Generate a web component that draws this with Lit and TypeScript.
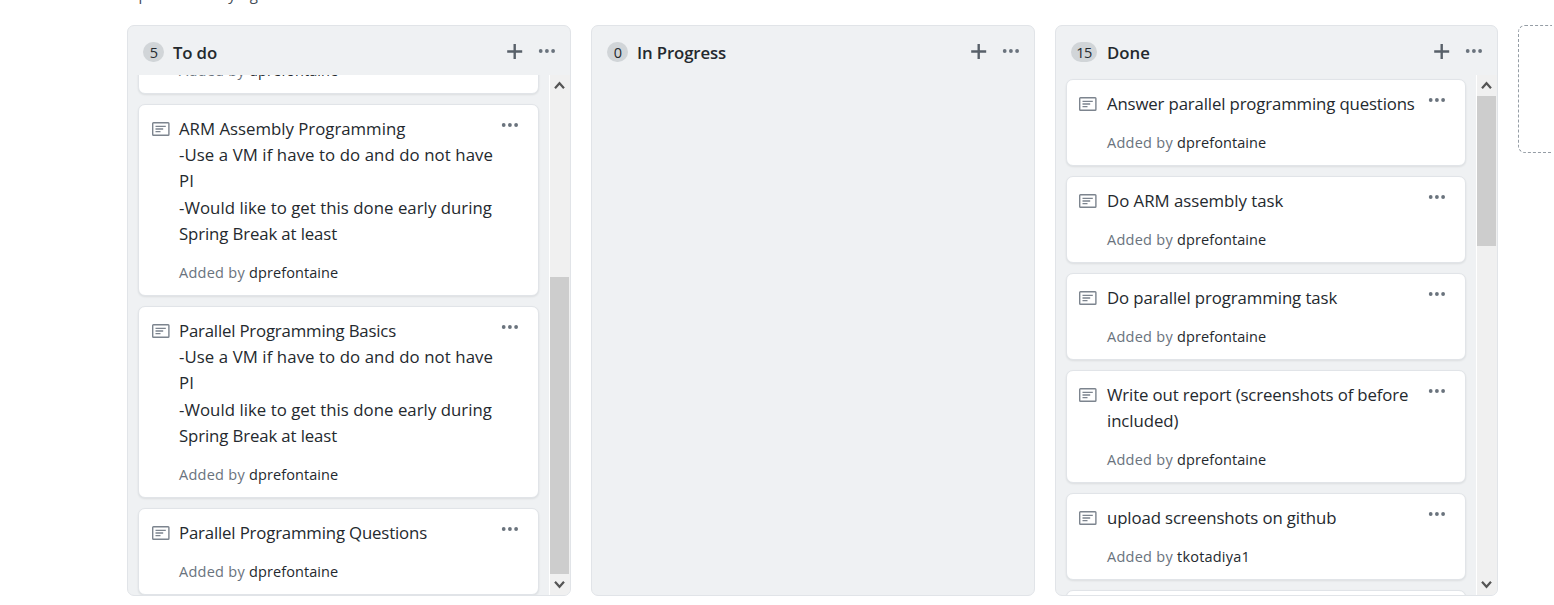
import { LitElement, html, css, svg } from "lit";
import { customElement, property } from "lit/decorators.js";

@customElement("fit-text")
class FitText extends LitElement {
  @property() text = "";
  @property({ type: Number }) width = 0;
  static styles = css`
    :host { display: inline-block; white-space: pre; }
    .run { display: inline-block; white-space: pre; }
  `;
  render() {
    return html`<span class="run">${this.text}</span>`;
  }
  updated() {
    const run = this.renderRoot.querySelector(".run") as HTMLElement;
    if (!this.text) return;
    run.style.letterSpacing = "0px";
    const natural = run.getBoundingClientRect().width;
    const spacing = (this.width - natural) / this.text.length;
    run.style.letterSpacing = spacing.toFixed(3) + "px";
  }
}

type Line = [string, number];
interface Note { lines: Line[]; by: Line }
interface Column { title: Line; count: string; cls: string; notes: Note[]; scroll: boolean }

const dp: Line = ["dprefontaine", 89.3];
const vm: Line[] = [
  ["-Use a VM if have to do and do not have", 314],
  ["PI", 15],
  ["-Would like to get this done early during", 313],
  ["Spring Break at least", 158],
];
const columns: Column[] = [
  {
    title: ["To do", 44], count: "5", cls: "todo", scroll: true,
    notes: [
      { lines: [["", 0]], by: dp },
      { lines: [["ARM Assembly Programming", 226.3], ...vm], by: dp },
      { lines: [["Parallel Programming Basics", 217], ...vm], by: dp },
      { lines: [["Parallel Programming Questions", 248]], by: dp },
    ],
  },
  { title: ["In Progress", 89], count: "0", cls: "progress", scroll: false, notes: [] },
  {
    title: ["Done", 43], count: "15", cls: "done", scroll: true,
    notes: [
      { lines: [["Answer parallel programming questions", 307.7]], by: dp },
      { lines: [["Do ARM assembly task", 176.3]], by: dp },
      { lines: [["Do parallel programming task", 230.2]], by: dp },
      { lines: [["Write out report (screenshots of before", 301.3], ["included)", 71.3]], by: dp },
      { lines: [["upload screenshots on github", 229.3]], by: ["tkotadiya1", 73] },
      { lines: [["", 0]], by: ["", 0] },
    ],
  },
];

const dots = html`<svg class="dots" viewBox="0 0 18 6" width="18" height="6">
  ${[2.7, 8.9, 15.1].map((x) => svg`<circle cx=${x} cy="3" r="1.9" fill="#6a737d"></circle>`)}
</svg>`;
const plus = html`<svg class="plus" viewBox="0 0 16 16" width="16" height="16">
  <path d="M7.7 1v15M.2 8.5h15" stroke="#586069" stroke-width="2.4" fill="none"></path>
</svg>`;
const noteIcon = html`<svg class="note" viewBox="0 0 18 14" width="18" height="14">
  <rect x=".7" y=".7" width="16.2" height="12.6" rx=".8" fill="none" stroke="#7c848e" stroke-width="1.4"></rect>
  <path d="M3.5 4.4h10.3M3.5 7h7.7M3.5 9.6h5" stroke="#7c848e" stroke-width="1.3" fill="none"></path>
</svg>`;
const arrow = (d: string) => html`<svg class="arrow" viewBox="0 0 20 21" width="20" height="21">
  <path d=${d} stroke="#555" stroke-width="2.2" fill="none"></path>
</svg>`;

@customElement("app-root")
class AppRoot extends LitElement {
  static styles = css`
    :host {
      display: block; box-sizing: border-box;
      width: 100%; height: 605px; overflow: hidden;
      background: #fff; color: #24292e;
      font: 16.8px/26.25px "Open Sans", "Noto Sans", sans-serif;
    }
    * { box-sizing: border-box; }
    svg { display: block; flex: none; }
    .caption { height: 25px; padding-left: 127px; display: flex; align-items: flex-start; color: #444d56; }
    .caption fit-text { margin-top: -17px; font-size: 15px; line-height: 22px; }
    .board { display: flex; gap: 20px; padding-left: 127px; }
    .column {
      width: 444px; height: 571px; flex: none; display: flex; flex-direction: column;
      background: #eff1f3; border: 1px solid #e1e4e8; border-radius: 7px; overflow: hidden;
    }
    .done { width: 443px; }
    .head { height: 49px; flex: none; display: flex; padding: 0 14px 0 15px; }
    .count {
      height: 20px; min-width: 21px; margin: 16px 9px 0 0; padding: 0 6px;
      border-radius: 10px; background: #d1d5d8; text-align: center;
      font-size: 14.5px; line-height: 21.5px; letter-spacing: -0.6px;
    }
    .done .count { width: 26px; padding: 0 4px; margin-right: 10px; }
    .title { font-weight: 600; margin-top: 14px; flex: 1; }
    .head .plus { margin: 17px 15px 0 0; }
    .head .dots { margin-top: 22px; }
    .body { flex: 1; min-height: 0; display: flex; }
    .list { flex: 1; overflow: hidden; padding: 4px 10px 0; display: flex; flex-direction: column; gap: 10px; }
    .todo .list { justify-content: flex-end; }
    .card {
      flex: none; width: 401px; display: flex; align-items: flex-start; padding: 10.75px 19px 10.75px 13px;
      background: #fff; border: 1px solid #e1e4e8; border-radius: 7px;
      box-shadow: 0 1px 2px rgba(27, 31, 35, 0.09);
    }
    .done .card { width: 400px; }
    .done .card .note { margin: 6px 10px 0 -1px; }
    .card .note { margin: 6.5px 9px 0 0; }
    .card .text { flex: 1; min-width: 0; }
    .card .dots { margin-top: 6px; }
    .line { height: 26.25px; }
    .by { margin-top: 14.75px; height: 22.5px; font-size: 14.5px; line-height: 22.5px; white-space: nowrap; }
    .muted { color: #6a737d; }
    .bar {
      width: 21px; flex: none; display: flex; flex-direction: column;
      background: #f0f0f0; border-left: 1px solid #fff;
    }
    .bar .gap { flex: 1; }
    .thumb { width: 19px; background: #cdcdcd; }
    .todo .thumb { height: 297px; }
    .done .thumb { height: 150px; }
    .todo .gap.after, .done .gap.before { display: none; }
    .add {
      width: 34px; height: 128px; flex: none;
      border: 1px dashed #959da5; border-right: none; border-radius: 7px 0 0 7px;
    }
  `;

  card(n: Note) {
    return html`<div class="card">
      ${noteIcon}
      <div class="text">
        ${n.lines.map(([t, w]) => html`<div class="line"><fit-text .text=${t} .width=${w}></fit-text></div>`)}
        <div class="by">${n.by[0] ? html`<fit-text class="muted" .text=${"Added by "} .width=${70}></fit-text><fit-text .text=${n.by[0]} .width=${n.by[1]}></fit-text>` : ""}</div>
      </div>
      ${dots}
    </div>`;
  }

  render() {
    return html`
      <div class="caption"><fit-text .text=${"Updated 1 day ago"} .width=${141}></fit-text></div>
      <div class="board">
        ${columns.map((c) => html`<section class="column ${c.cls}">
          <div class="head">
            <span class="count">${c.count}</span>
            <span class="title"><fit-text .text=${c.title[0]} .width=${c.title[1]}></fit-text></span>
            ${plus}${dots}
          </div>
          <div class="body">
            <div class="list">${c.notes.map((n) => this.card(n))}</div>
            ${c.scroll ? html`<div class="bar">
              ${arrow("M5 13.2 9.5 8.2l4.5 5")}
              <div class="gap before"></div><div class="thumb"></div><div class="gap after"></div>
              ${arrow("M5 7.8 9.5 12.8l4.5-5")}
            </div>` : ""}
          </div>
        </section>`)}
        <div class="add"></div>
      </div>`;
  }
}
